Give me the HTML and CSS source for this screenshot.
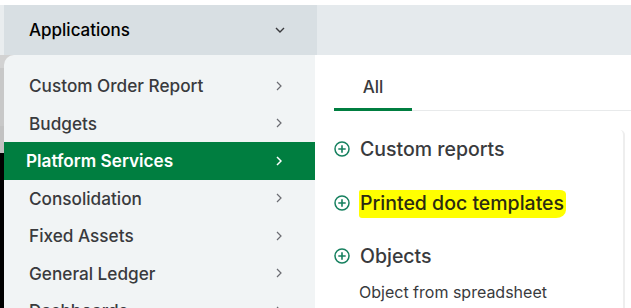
FILE: index.html
```html
<!DOCTYPE html>
<html>
<head>
<meta charset="utf-8">
<link rel="stylesheet" href="styles.css">
</head>
<body>
<div class="page">
  <div class="topgap"></div>
  <div class="header">
    <div class="hdr-edge"></div>
    <div class="hdr-left">
      <span class="hdr-title">Applications</span>
      <svg class="chev-down" width="10" height="6" viewBox="0 0 10 6"><polyline points="1,1 5,5 9,1" fill="none" stroke="#393a3d" stroke-width="1.4"/></svg>
    </div>
    <div class="hdr-right"></div>
  </div>
  <div class="content">
    <div class="left">
      <div class="edge"><span class="edge-t">t</span></div>
      <nav class="menu">
        <div class="row"><span>Custom Order Report</span><svg class="chev" width="6" height="10" viewBox="0 0 6 10"><polyline points="1,1 5,5 1,9" fill="none" stroke="#6b6c72" stroke-width="1.2"/></svg></div>
        <div class="row"><span>Budgets</span><svg class="chev" width="6" height="10" viewBox="0 0 6 10"><polyline points="1,1 5,5 1,9" fill="none" stroke="#6b6c72" stroke-width="1.2"/></svg></div>
        <div class="row active"><span>Platform Services</span><svg class="chev" width="6" height="10" viewBox="0 0 6 10"><polyline points="1,1 5,5 1,9" fill="none" stroke="#ffffff" stroke-width="1.5"/></svg></div>
        <div class="row"><span>Consolidation</span><svg class="chev" width="6" height="10" viewBox="0 0 6 10"><polyline points="1,1 5,5 1,9" fill="none" stroke="#6b6c72" stroke-width="1.2"/></svg></div>
        <div class="row"><span>Fixed Assets</span><svg class="chev" width="6" height="10" viewBox="0 0 6 10"><polyline points="1,1 5,5 1,9" fill="none" stroke="#6b6c72" stroke-width="1.2"/></svg></div>
        <div class="row"><span>General Ledger</span><svg class="chev" width="6" height="10" viewBox="0 0 6 10"><polyline points="1,1 5,5 1,9" fill="none" stroke="#6b6c72" stroke-width="1.2"/></svg></div>
        <div class="row"><span>Dashboards</span><svg class="chev" width="6" height="10" viewBox="0 0 6 10"><polyline points="1,1 5,5 1,9" fill="none" stroke="#6b6c72" stroke-width="1.2"/></svg></div>
      </nav>
    </div>
    <main class="panel">
      <div class="tabs">
        <div class="tab">All</div>
        <div class="tab-rest"></div>
      </div>
      <div class="card">
        <div class="item">
          <svg class="plus" width="16" height="16" viewBox="0 0 16 16"><circle cx="8" cy="8" r="7" fill="none" stroke="#16805f" stroke-width="1.5"/><path d="M8 4.3v7.4M4.3 8h7.4" stroke="#16805f" stroke-width="1.6"/></svg>
          <span class="item-title">Custom reports</span>
        </div>
        <div class="item">
          <svg class="plus" width="16" height="16" viewBox="0 0 16 16"><circle cx="8" cy="8" r="7" fill="none" stroke="#16805f" stroke-width="1.5"/><path d="M8 4.3v7.4M4.3 8h7.4" stroke="#16805f" stroke-width="1.6"/></svg>
          <span class="item-title highlight">Printed doc templates</span>
        </div>
        <div class="item">
          <svg class="plus" width="16" height="16" viewBox="0 0 16 16"><circle cx="8" cy="8" r="7" fill="none" stroke="#16805f" stroke-width="1.5"/><path d="M8 4.3v7.4M4.3 8h7.4" stroke="#16805f" stroke-width="1.6"/></svg>
          <span class="item-title">Objects</span>
        </div>
        <div class="sub">Object from spreadsheet</div>
      </div>
    </main>
  </div>
</div>
</body>
</html>
```
FILE: styles.css
```css
* { box-sizing: border-box; }
html, body { margin: 0; padding: 0; background: #ffffff; }
body { font-family: "Inter", "Liberation Sans", Arial, sans-serif; color: #393a3d; }
.page { width: 631px; height: 308px; overflow: hidden; display: flex; flex-direction: column; }
.topgap { height: 5px; flex: none; }
.header { height: 50px; flex: none; display: flex; }
.hdr-edge { width: 4px; background: #e9edef; }
.hdr-left { width: 313px; background: #d8dfe3; display: flex; align-items: center; justify-content: space-between; padding: 0 32px 0 25px; }
.hdr-title { font-size: 17px; font-weight: 500; color: #000; }
.chev-down { display: block; }
.hdr-right { flex: 1; background: #e5eaed; }
.content { flex: 1; display: flex; min-height: 0; }
.left { width: 315px; flex: none; display: flex; background: linear-gradient(#d2d2d2 0 13px, #c8c8c8 13px 71px, #c2c2c2 71px 98px, #000 98px); }
.edge { width: 4px; flex: none; overflow: hidden; }
.edge-t { display: block; font-size: 20px; color: #333; margin-left: -7px; margin-top: 30px; line-height: 1; }
.menu { flex: 1; background: #f1f4f5; border-top-left-radius: 10px; padding-top: 12px; }
.row { height: 37.5px; display: flex; align-items: center; justify-content: space-between; padding: 0 33px 0 25px; font-size: 17.2px; font-weight: 500; color: #393a3d; }
.row.active { background: #007e40; color: #ffffff; font-weight: 600; padding-left: 22px; }
.chev { display: block; }
.panel { flex: 1; background: #ffffff; display: flex; flex-direction: column; }
.tabs { display: flex; height: 56px; flex: none; padding-left: 19px; }
.tab { width: 78px; border-bottom: 3px solid #007e40; display: flex; align-items: flex-end; justify-content: center; padding-bottom: 11px; font-size: 17px; font-weight: 500; color: #393a3d; }
.tab-rest { flex: 1; border-bottom: 1px solid #e8eaeb; }
.card { margin-top: 19px; flex: 1; border-right: 2px solid #eeeeee; border-top-right-radius: 5px; margin-right: 6px; padding: 8px 0 0 19px; display: flex; flex-direction: column; gap: 31.5px; }
.item { display: flex; align-items: center; height: 22px; gap: 10px; }
.plus { display: block; flex: none; }
.item-title { font-size: 19.5px; font-weight: 500; color: #393a3d; line-height: 22px; }
.highlight { background: #ffff00; color: #2b2b12; padding: 2px 2px 4px 1px; margin-left: -1px; margin-top: 2px; border-radius: 2px 6px 10px 3px / 2px 4px 8px 3px; }
.sub { font-size: 16px; color: #393a3d; padding-left: 25px; margin-top: -16px; line-height: 18px; }
```
